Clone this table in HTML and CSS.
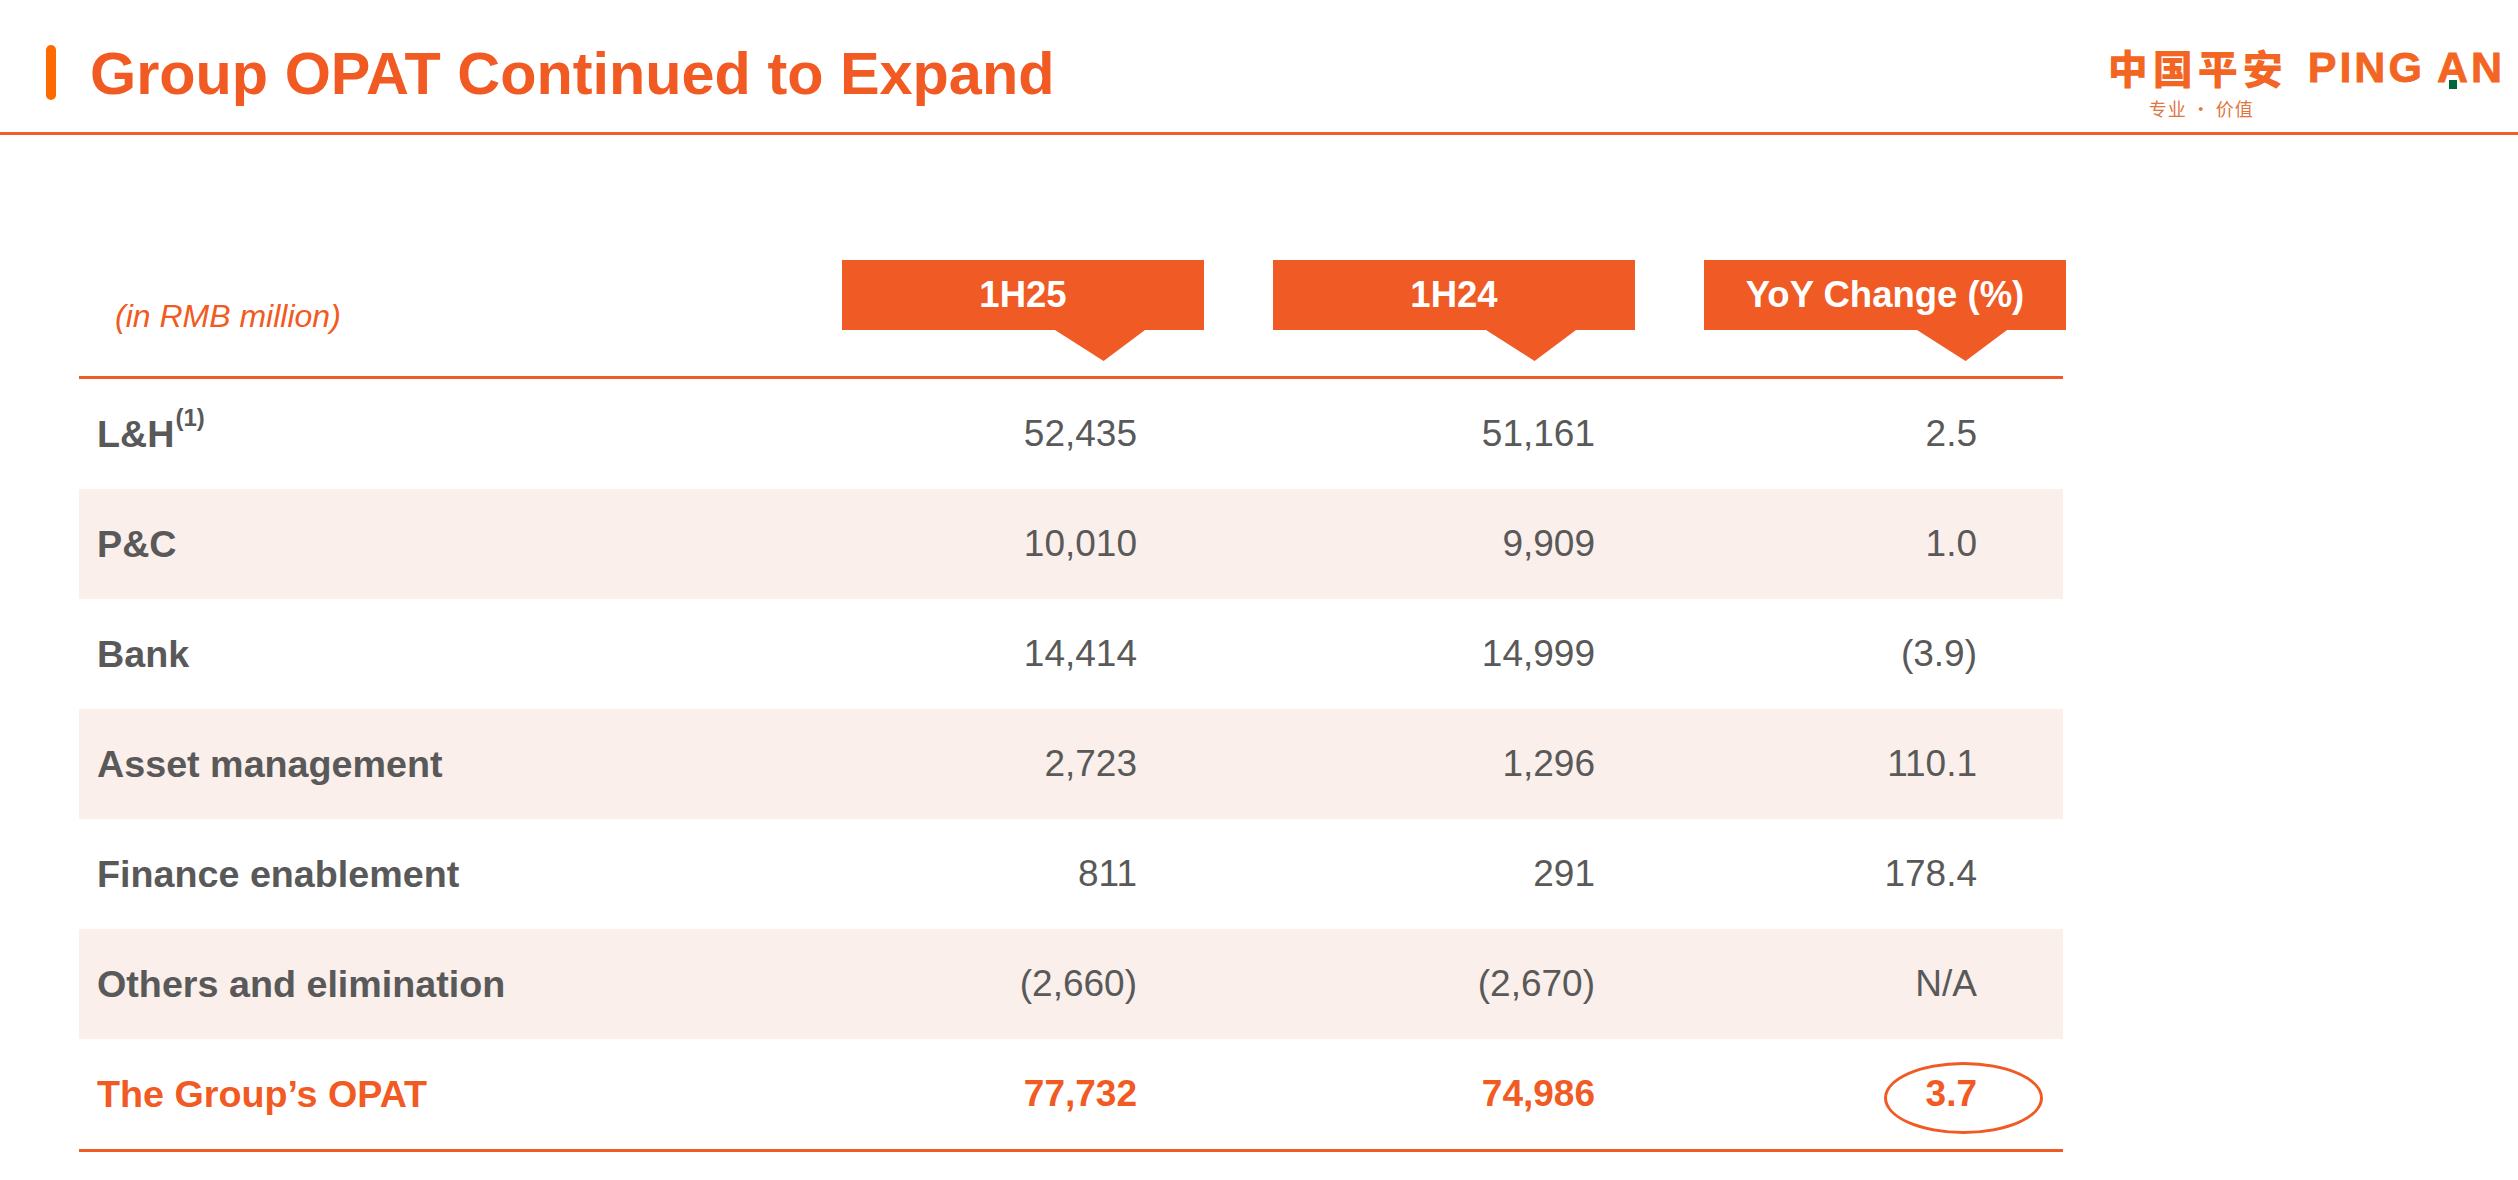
FILE: index.html
```html
<!DOCTYPE html>
<html lang="en">
<head>
<meta charset="utf-8">
<title>Group OPAT Continued to Expand</title>
<link rel="stylesheet" href="styles.css">
</head>
<body>
<header class="topbar">
  <div class="title-wrap">
    <span class="accent"></span>
    <h1 class="title">Group OPAT Continued to Expand</h1>
  </div>
  <div class="logo">
    <div class="logo-main">
      <span class="logo-cn">中国平安</span>
      <span class="logo-en">PING<span class="logo-an">A<span class="logo-dot"></span></span>N</span>
    </div>
    <div class="logo-sub">专业 · 价值</div>
  </div>
</header>

<main class="content">
  <div class="table">
    <div class="thead">
      <div class="unit">(in RMB million)</div>
      <div class="hbox">1H25</div>
      <div class="hbox">1H24</div>
      <div class="hbox">YoY Change (%)</div>
    </div>

    <div class="row">
      <div class="label">L&amp;H<span class="sup">(1)</span></div>
      <div class="num c1">52,435</div>
      <div class="num c2">51,161</div>
      <div class="num c3">2.5</div>
    </div>
    <div class="row alt">
      <div class="label">P&amp;C</div>
      <div class="num c1">10,010</div>
      <div class="num c2">9,909</div>
      <div class="num c3">1.0</div>
    </div>
    <div class="row">
      <div class="label">Bank</div>
      <div class="num c1">14,414</div>
      <div class="num c2">14,999</div>
      <div class="num c3">(3.9)</div>
    </div>
    <div class="row alt">
      <div class="label">Asset management</div>
      <div class="num c1">2,723</div>
      <div class="num c2">1,296</div>
      <div class="num c3">110.1</div>
    </div>
    <div class="row">
      <div class="label">Finance enablement</div>
      <div class="num c1">811</div>
      <div class="num c2">291</div>
      <div class="num c3">178.4</div>
    </div>
    <div class="row alt">
      <div class="label">Others and elimination</div>
      <div class="num c1">(2,660)</div>
      <div class="num c2">(2,670)</div>
      <div class="num c3">N/A</div>
    </div>
    <div class="row total">
      <div class="label">The Group’s OPAT</div>
      <div class="num c1">77,732</div>
      <div class="num c2">74,986</div>
      <div class="num c3"><span class="circled">3.7</span></div>
    </div>
  </div>
</main>
</body>
</html>
```

FILE: styles.css
```css
* { box-sizing: border-box; }

html, body {
  margin: 0;
  padding: 0;
  background: #ffffff;
}

body {
  width: 2518px;
  height: 1180px;
  overflow: hidden;
  font-family: "Liberation Sans", Arial, Helvetica, sans-serif;
  color: #595959;
}

/* ---------- top bar ---------- */
.topbar {
  height: 135px;
  border-bottom: 3px solid #f1602b;
  display: flex;
  justify-content: space-between;
  align-items: flex-start;
  padding: 0 13px 0 46px;
}

.title-wrap {
  display: flex;
  align-items: flex-start;
  gap: 34px;
  padding-top: 45px;
}

.accent {
  display: block;
  width: 10px;
  height: 55px;
  border-radius: 5px;
  background: #ff6a00;
}

.title {
  margin: 0;
  font-size: 59.4px;
  line-height: 59px;
  font-weight: 700;
  color: #f15a22;
  margin-top: -1px;
}

.logo {
  padding-top: 48px;
  display: flex;
  flex-direction: column;
  align-items: flex-start;
}

.logo-main {
  display: flex;
  align-items: center;
  gap: 20px;
  height: 38px;
}

.logo-cn {
  font-family: "Noto Sans CJK SC", "Noto Sans CJK JP", sans-serif;
  font-weight: 900;
  font-size: 40px;
  line-height: 38px;
  letter-spacing: 5px;
  color: #f26522;
}

.logo-en {
  font-family: "Liberation Sans", Arial, sans-serif;
  font-weight: 700;
  font-size: 43px;
  line-height: 38px;
  letter-spacing: 3px;
  color: #f26522;
  -webkit-text-stroke: 0.8px #f26522;
}

.logo-an {
  position: relative;
  margin-left: 12px;
}

.logo-dot {
  position: absolute;
  left: 12px;
  bottom: 2px;
  width: 8px;
  height: 9px;
  background: #00683b;
}

.logo-sub {
  margin-top: 12px;
  margin-left: 41px;
  font-family: "Noto Sans CJK SC", "Noto Sans CJK JP", sans-serif;
  font-size: 18px;
  line-height: 20px;
  color: #e2743f;
  letter-spacing: 1px;
}

/* ---------- table ---------- */
.content {
  padding: 125px 0 0 79px;
}

.table {
  width: 1984px;
}

.thead,
.row {
  display: grid;
  grid-template-columns: 694px 362px 362px 359px;
  column-gap: 69px;
}

.thead {
  height: 119px;
  border-bottom: 3px solid #f05a24;
  align-items: start;
}

.unit {
  padding: 38px 0 0 36px;
  font-size: 32px;
  line-height: 36px;
  font-style: italic;
  color: #f15a22;
}

.hbox {
  position: relative;
  width: 362px;
  height: 70px;
  background: #f05a24;
  color: #ffffff;
  font-weight: 700;
  font-size: 36.5px;
  display: flex;
  align-items: center;
  justify-content: center;
}

.hbox::after {
  content: "";
  position: absolute;
  top: 100%;
  left: 213px;
  width: 90px;
  height: 31px;
  background: #f05a24;
  clip-path: polygon(0 0, 100% 0, 54% 100%);
}

.row {
  height: 110px;
  align-items: center;
  font-size: 37.7px;
}

.row.alt {
  background: #faefea;
}

.label {
  padding-left: 18px;
  font-weight: 700;
  color: #595959;
}

.sup {
  font-size: 24px;
  vertical-align: 21px;
  line-height: 0;
  margin-left: 1px;
}

.num {
  text-align: right;
  font-size: 37px;
  color: #595959;
}

.num.c1 { padding-right: 67px; }
.num.c2 { padding-right: 40px; }
.num.c3 { padding-right: 86px; }

.row.total {
  border-bottom: 3px solid #f05a24;
  height: 113px;
}

.row.total .label,
.row.total .num {
  color: #f15a22;
  font-weight: 700;
}

.circled {
  position: relative;
  display: inline-block;
}

.circled::before {
  content: "";
  position: absolute;
  left: -42px;
  top: 50%;
  width: 153px;
  height: 66px;
  margin-top: -32px;
  border: 3.5px solid #f15a22;
  border-radius: 50%;
}
```
